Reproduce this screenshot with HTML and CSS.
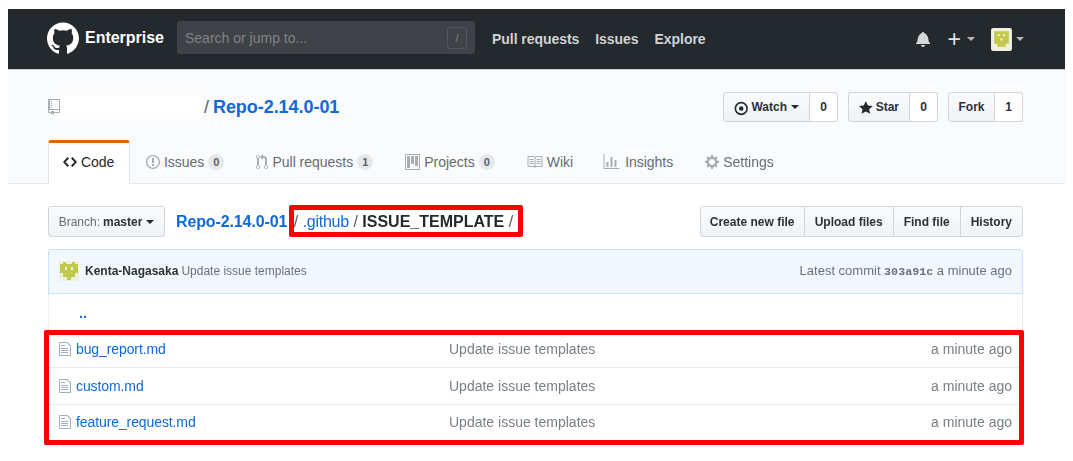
FILE: index.html
```html
<!DOCTYPE html>
<html lang="en">
<head>
<meta charset="utf-8">
<title>ISSUE_TEMPLATE</title>
<link rel="stylesheet" href="styles.css">
</head>
<body>
<div class="page">
  <header class="topbar">
    <svg class="logo" viewBox="0 0 16 16" aria-hidden="true"><path fill="#fff" fill-rule="evenodd" d="M8 0C3.58 0 0 3.58 0 8c0 3.54 2.29 6.53 5.47 7.59.4.07.55-.17.55-.38 0-.19-.01-.82-.01-1.49-2.01.37-2.53-.49-2.69-.94-.09-.23-.48-.94-.82-1.13-.28-.15-.68-.52-.01-.53.63-.01 1.08.58 1.23.82.72 1.21 1.87.87 2.33.66.07-.52.28-.87.51-1.07-1.78-.2-3.64-.89-3.64-3.95 0-.87.31-1.59.82-2.15-.08-.2-.36-1.02.08-2.12 0 0 .67-.21 2.2.82.64-.18 1.32-.27 2-.27.68 0 1.36.09 2 .27 1.53-1.04 2.2-.82 2.2-.82.44 1.1.16 1.92.08 2.12.51.56.82 1.27.82 2.15 0 3.07-1.87 3.75-3.65 3.95.29.25.54.73.54 1.48 0 1.07-.01 1.93-.01 2.2 0 .21.15.46.55.38A8.013 8.013 0 0 0 16 8c0-4.42-3.58-8-8-8z"/></svg>
    <span class="brand">Enterprise</span>
    <div class="search"><span>Search or jump to...</span><kbd>/</kbd></div>
    <nav class="topnav"><a>Pull requests</a><a>Issues</a><a>Explore</a></nav>
    <div class="topicons">
      <svg class="bell" viewBox="0 0 14 16" aria-hidden="true"><path fill="#d5d7d9" d="M14 12v1H0v-1l.73-.58c.77-.77.81-2.55 1.19-4.42C2.69 3.23 6 2 6 2c0-.55.45-1 1-1s1 .45 1 1c0 0 3.39 1.23 4.16 5 .38 1.88.42 3.66 1.19 4.42l.66.58H14zM7 16c1.11 0 2-.89 2-2H5c0 1.11.89 2 2 2z"/></svg>
      <span class="plus">+</span><i class="caret light"></i>
      <svg class="avatar" viewBox="0 0 20 22" aria-hidden="true"><rect width="20" height="22" rx="2" fill="#eef0e0"/><path fill="#c3c94a" d="M3 3h14v12h-3v3H6v-3H3z"/><path fill="#eef0e0" d="M6.500 6h2v2h-2zM11.500 6h2v2h-2zM9 10h2v2H9z"/></svg>
      <i class="caret light"></i>
    </div>
  </header>

  <section class="repohead">
    <div class="repotitle">
      <h1 class="reponame">
        <svg class="repoicon" viewBox="0 0 12 16" aria-hidden="true"><path fill="#a9adb1" fill-rule="evenodd" d="M4 9H3V8h1v1zm0-3H3v1h1V6zm0-2H3v1h1V4zm0-2H3v1h1V2zm8-1v12c0 .55-.45 1-1 1H6v2l-1.500-1.500L3 16v-2H1c-.55 0-1-.45-1-1V1c0-.55.45-1 1-1h10c.55 0 1 .45 1 1zm-1 10H1v2h2v-1h3v1h5v-2zm0-10H2v9h9V1z"/></svg>
        <span class="masked"></span>
        <span class="slash">/</span>
        <a class="link strong">Repo-2.14.0-01</a>
      </h1>
      <div class="actions">
        <div class="counter">
          <span class="btn watch"><svg class="ico-eye" viewBox="0 0 16 16" aria-hidden="true"><circle cx="8" cy="8" r="6.500" fill="none" stroke="#24292e" stroke-width="1.800"/><circle cx="8" cy="8" r="2.500" fill="#24292e"/></svg><span>Watch</span><i class="caret"></i></span><span class="count">0</span>
        </div>
        <div class="counter">
          <span class="btn star"><svg class="ico-star" viewBox="0 0 14 16" aria-hidden="true"><path fill="#24292e" fill-rule="evenodd" d="M14 6l-4.900-.64L7 1 4.900 5.360 0 6l3.600 3.260L2.670 14 7 11.670 11.330 14l-.93-4.740L14 6z"/></svg><span>Star</span></span><span class="count">0</span>
        </div>
        <div class="counter">
          <span class="btn fork">Fork</span><span class="count">1</span>
        </div>
      </div>
    </div>
    <nav class="tabs">
      <a class="tab selected">
        <svg class="tabicon" viewBox="0 0 14 16" aria-hidden="true"><path fill="#24292e" fill-rule="evenodd" d="M9.500 3L8 4.500 11.500 8 8 11.500 9.500 13 14 8 9.500 3zm-5 0L0 8l4.500 5L6 11.500 2.500 8 6 4.500 4.500 3z"/></svg>Code
      </a>
      <a class="tab">
        <svg class="tabicon" viewBox="0 0 14 16" aria-hidden="true"><path fill="#a9adb1" fill-rule="evenodd" d="M7 2.300c3.140 0 5.700 2.560 5.700 5.700s-2.560 5.700-5.700 5.700A5.710 5.710 0 0 1 1.300 8c0-3.140 2.560-5.700 5.700-5.700zM7 1C3.140 1 0 4.140 0 8s3.140 7 7 7 7-3.140 7-7-3.140-7-7-7zm1 3H6v5h2V4zm0 6H6v2h2v-2z"/></svg>Issues<span class="pill">0</span>
      </a>
      <a class="tab">
        <svg class="tabicon w12" viewBox="0 0 12 16" aria-hidden="true"><path fill="#a9adb1" fill-rule="evenodd" d="M11 11.280V5c-.030-.780-.340-1.470-.940-2.060C9.460 2.350 8.780 2.030 8 2H7V0L4 3l3 3V4h1c.270.020.480.110.690.310.210.200.300.420.310.690v6.280A1.993 1.993 0 0 0 10 15a1.993 1.993 0 0 0 1-3.720zm-1 2.920c-.660 0-1.200-.550-1.200-1.200 0-.650.550-1.200 1.200-1.200.650 0 1.200.550 1.200 1.200 0 .650-.550 1.200-1.200 1.200zM4 3c0-1.110-.890-2-2-2a1.993 1.993 0 0 0-1 3.720v6.560A1.993 1.993 0 0 0 2 15a1.993 1.993 0 0 0 1-3.720V4.720c.590-.340 1-.980 1-1.720zm-.800 10c0 .660-.550 1.200-1.200 1.200-.650 0-1.200-.550-1.200-1.200 0-.650.550-1.200 1.200-1.200.650 0 1.200.550 1.200 1.200zM2 4.200C1.340 4.200.800 3.650.800 3c0-.650.550-1.200 1.200-1.200.650 0 1.200.550 1.200 1.200 0 .650-.550 1.200-1.200 1.200z"/></svg>Pull requests<span class="pill">1</span>
      </a>
      <a class="tab">
        <svg class="tabicon w15" viewBox="0 0 15 16" aria-hidden="true"><path fill="#a9adb1" fill-rule="evenodd" d="M10 12h3V2h-3v10zm-4-2h3V2H6v8zm-4 4h3V2H2v12zm-1 1h13V1H1v14zM14 0H1a1 1 0 0 0-1 1v14a1 1 0 0 0 1 1h13a1 1 0 0 0 1-1V1a1 1 0 0 0-1-1z"/></svg>Projects<span class="pill">0</span>
      </a>
      <a class="tab wiki">
        <svg class="tabicon w16" viewBox="0 0 16 16" aria-hidden="true"><path fill="#a9adb1" fill-rule="evenodd" d="M3 5h4v1H3V5zm0 3h4V7H3v1zm0 2h4V9H3v1zm11-5h-4v1h4V5zm0 2h-4v1h4V7zm0 2h-4v1h4V9zm2-6v9c0 .550-.450 1-1 1H9.500l-1 1-1-1H2c-.550 0-1-.450-1-1V3c0-.550.450-1 1-1h5.500l1 1 1-1H15c.550 0 1 .450 1 1zm-8 .500L7.500 3H2v9h6V3.500zm7-.500H9.500l-.500.500V12h6V3z" transform="translate(-.5)"/></svg>Wiki
      </a>
      <a class="tab">
        <svg class="tabicon w17" viewBox="0 0 16 16" aria-hidden="true"><path fill="#a9adb1" fill-rule="evenodd" d="M16 14v1H0V0h1v14h15zM5 13H3V8h2v5zm4 0H7V3h2v10zm4 0h-2V6h2v7z"/></svg>Insights
      </a>
      <a class="tab">
        <svg class="tabicon" viewBox="0 0 14 16" aria-hidden="true"><path fill="#a9adb1" fill-rule="evenodd" d="M14 8.770v-1.600l-1.940-.640-.450-1.090.880-1.840-1.130-1.130-1.810.910-1.090-.450-.690-1.920h-1.600l-.630 1.940-1.110.450-1.840-.880-1.130 1.130.910 1.810-.450 1.090L0 7.230v1.590l1.940.640.450 1.090-.880 1.840 1.130 1.130 1.810-.910 1.090.450.690 1.920h1.590l.630-1.940 1.110-.450 1.840.880 1.130-1.130-.920-1.810.470-1.090L14 8.750v.020zM7 11c-1.660 0-3-1.340-3-3s1.340-3 3-3 3 1.340 3 3-1.340 3-3 3z"/></svg>Settings
      </a>
    </nav>
  </section>

  <main class="container">
    <div class="filenav">
      <span class="btn branch"><span class="muted">Branch:</span><b>master</b><i class="caret"></i></span>
      <div class="crumbs"><a class="link strong tight">Repo-2.14.0-01</a> <span class="slash first">/</span> <a class="link tighter">.github</a> <span class="slash">/</span> <strong>ISSUE_TEMPLATE</strong> <span class="slash">/</span></div>
      <div class="btngroup"><span class="btn create">Create new file</span><span class="btn">Upload files</span><span class="btn">Find file</span><span class="btn">History</span></div>
    </div>
    <div class="commit">
      <svg class="commitavatar" viewBox="0 0 20 20" aria-hidden="true"><rect width="20" height="20" rx="2" fill="#eef0e0"/><path fill="#c3c94a" d="M4 1h3v2h6V1h3v2h3v9h-3v4h-4v3H8v-3H4v-4H1V3h3z"/><path fill="#eef0e0" d="M6 6h2v3H6zM12 6h2v3h-2z"/></svg>
      <b class="author">Kenta-Nagasaka</b>
      <span class="message">Update issue templates</span>
      <span class="latest">Latest commit <code>303a91c</code> a minute ago</span>
    </div>
    <div class="files">
      <div class="row up"><a class="link dots">..</a></div>
      <div class="row">
        <span class="name"><svg class="fileicon" viewBox="0 0 12 16" aria-hidden="true"><path fill="#9fb0bf" fill-rule="evenodd" d="M6 5H2V4h4v1zM2 8h7V7H2v1zm0 2h7V9H2v1zm0 2h7v-1H2v1zm10-7.500V14c0 .550-.450 1-1 1H1c-.550 0-1-.450-1-1V2c0-.550.450-1 1-1h7.500L12 4.500zM11 5L8 2H1v12h10V5z"/></svg><a class="link">bug_report.md</a></span>
        <span class="msg">Update issue templates</span><span class="age">a minute ago</span>
      </div>
      <div class="row">
        <span class="name"><svg class="fileicon" viewBox="0 0 12 16" aria-hidden="true"><path fill="#9fb0bf" fill-rule="evenodd" d="M6 5H2V4h4v1zM2 8h7V7H2v1zm0 2h7V9H2v1zm0 2h7v-1H2v1zm10-7.500V14c0 .550-.450 1-1 1H1c-.550 0-1-.450-1-1V2c0-.550.450-1 1-1h7.500L12 4.500zM11 5L8 2H1v12h10V5z"/></svg><a class="link">custom.md</a></span>
        <span class="msg">Update issue templates</span><span class="age">a minute ago</span>
      </div>
      <div class="row">
        <span class="name"><svg class="fileicon" viewBox="0 0 12 16" aria-hidden="true"><path fill="#9fb0bf" fill-rule="evenodd" d="M6 5H2V4h4v1zM2 8h7V7H2v1zm0 2h7V9H2v1zm0 2h7v-1H2v1zm10-7.500V14c0 .550-.450 1-1 1H1c-.550 0-1-.450-1-1V2c0-.550.450-1 1-1h7.500L12 4.500zM11 5L8 2H1v12h10V5z"/></svg><a class="link">feature_request.md</a></span>
        <span class="msg">Update issue templates</span><span class="age">a minute ago</span>
      </div>
    </div>
  </main>
</div>
<div class="callout callout-path"></div>
<div class="callout callout-files"></div>
</body>
</html>
```

FILE: styles.css
```css
* { box-sizing: border-box; }
html, body { margin: 0; height: 461px; overflow: hidden; background: #fff; }
body { position: relative; font-family: "Liberation Sans", Arial, sans-serif; font-size: 14px; color: #24292e; }
.page { width: 1057px; margin: 9px 0 0 8px; filter: blur(.6px); }
.link { color: #1168d8; }
.strong { font-weight: 700; }

.topbar { height: 61px; background: #24292e; border-bottom: 1px solid #c9cbcd; display: flex; align-items: center; padding: 0 41px 0 39px; color: #fff; }
.logo { width: 32px; height: 33px; flex: none; margin-bottom: 1px; }
.brand { margin-left: 6px; margin-bottom: 2px; font-size: 16px; font-weight: 700; width: 92px; letter-spacing: -.02px; }
.search { width: 298px; height: 33px; margin-bottom: 3px; background: #3f4347; border-radius: 3px; display: flex; align-items: center; justify-content: space-between; padding: 0 8px; color: #7f8286; font-size: 14px; }
.search kbd { width: 20px; height: 22px; border: 1px solid #53585c; border-radius: 3px; font: 11px "Liberation Sans", sans-serif; display: flex; align-items: center; justify-content: center; color: #7e8387; }
.topnav { margin-left: 17px; display: flex; gap: 16px; font-weight: 700; color: #d0d1d3; letter-spacing: -.05px; }
.topicons { margin-left: auto; display: flex; align-items: center; }
.bell { width: 14px; height: 16px; }
.plus { margin-left: 18px; font-size: 23px; line-height: 20px; color: #e2e3e4; font-weight: 400; }
.caret { display: inline-block; width: 0; height: 0; border: 4px solid transparent; border-top-color: #24292e; border-bottom: 0; margin-left: 1px; }
.caret.light { border-top-color: #b5b7b9; margin-left: 6px; }
.avatar { width: 21px; height: 23px; margin-left: 16px; }
.avatar + .caret.light { margin-left: 4px; }

.repohead { height: 114px; background: #fafbfc; border-bottom: 1px solid #e5eaec; padding: 22px 42px 0 40px; display: flex; flex-direction: column; justify-content: space-between; }
.repotitle { display: flex; align-items: center; justify-content: space-between; }
.reponame { margin: 0; display: flex; align-items: center; font-size: 18px; font-weight: 400; color: #586069; letter-spacing: -.05px; }
.repoicon { width: 12px; height: 18px; }
.masked { width: 142px; height: 24px; background: #fff; }
.slash { color: #586069; margin: 0 4px 0 2px; }
.actions { display: flex; gap: 10px; }
.counter { display: flex; }
.btn { display: inline-flex; align-items: center; justify-content: center; gap: 3px; height: 30px; padding: 0 10px; font-size: 12px; font-weight: 700; color: #2c3137; background: linear-gradient(#fafbfc, #eff3f6); border: 1px solid #d1d5da; border-radius: 3px; white-space: nowrap; }
.counter .btn { border-radius: 3px 0 0 3px; }
.watch { width: 87px; }
.star { width: 62px; }
.fork { width: 47px; }
.count { display: flex; align-items: center; justify-content: center; width: 28px; height: 30px; font-size: 12px; font-weight: 700; color: #2c3137; background: #fff; border: 1px solid #d1d5da; border-left: 0; border-radius: 0 3px 3px 0; }
.ico-eye { width: 15px; height: 15px; margin-top: 2px; }
.ico-star { width: 14px; height: 16px; margin-top: 1px; }

.tabs { display: flex; height: 44px; margin-bottom: -1px; }
.tab { display: flex; align-items: center; padding: 0 16px; color: #656c74; white-space: nowrap; letter-spacing: -.02px; }
.tab.selected { background: #fff; color: #24292e; border: 1px solid #e1e4e8; border-top: 3px solid #e36209; border-bottom: 0; border-radius: 3px 3px 0 0; padding: 0 14px 3px; width: 82px; }
.tab.wiki { padding-right: 14px; }
.tabicon { width: 14px; height: 16px; margin-right: 4px; flex: none; }
.w12 { width: 12px; }
.w15 { width: 15px; }
.w16 { width: 16px; }
.w17 { width: 17px; height: 16px; margin-right: 5px; }
.pill { margin-left: 4px; padding: 0 5px; min-width: 16px; height: 16px; line-height: 16px; border-radius: 8px; background: #e6e8ea; font-size: 11px; font-weight: 700; color: #586069; text-align: center; }

.container { padding: 22px 42px 0 40px; }
.filenav { display: flex; align-items: center; }
.branch { height: 31px; width: 117px; font-weight: 400; }
.branch .muted { color: #656c74; }
.branch b { font-weight: 700; }
.crumbs { margin-left: 11px; font-size: 16px; white-space: pre; color: #24292e; }
.crumbs .slash { margin: 0; }
.crumbs .slash.first { margin-left: 2px; }
.tight { letter-spacing: -.12px; }
.tighter { letter-spacing: -.25px; }
.btngroup { margin-left: auto; display: flex; }
.btngroup .btn { border-radius: 0; border-left-width: 0; height: 31px; }
.btngroup .btn:first-child { border-left-width: 1px; border-radius: 3px 0 0 3px; }
.btngroup .btn:last-child { border-radius: 0 3px 3px 0; }
.btngroup .create { width: 105px; padding: 0; }

.commit { margin-top: 12px; height: 45px; padding: 0 10px 1px; background: #f1f8ff; border: 1px solid #c8e1ff; border-radius: 3px 3px 0 0; display: flex; align-items: center; font-size: 12px; color: #6a727a; }
.commitavatar { width: 20px; height: 20px; margin-right: 6px; }
.author { color: #2c3137; margin-right: 3px; }
.latest { margin-left: auto; font-size: 13px; }
.latest code { font: 700 11.7px "Liberation Mono", monospace; }

.files { border: 1px solid #eaecef; border-top: 0; border-bottom: 0; }
.row { height: 36.500px; display: flex; align-items: center; padding: 0 10px; color: #787f87; border-top: 1px solid #eaecef; }
.row.up { border-top: 0; padding-left: 30px; padding-top: 2px; }
.dots { font-weight: 700; }
.name { width: 390px; display: flex; align-items: center; gap: 5px; letter-spacing: -.1px; }
.fileicon { width: 12px; height: 16px; }
.age { margin-left: auto; }

.callout { position: absolute; border: 5px solid #f00; border-radius: 2px; }
.callout-path { left: 289px; top: 205px; width: 234px; height: 32px; }
.callout-files { left: 44px; top: 330px; width: 980px; height: 115px; }
```
